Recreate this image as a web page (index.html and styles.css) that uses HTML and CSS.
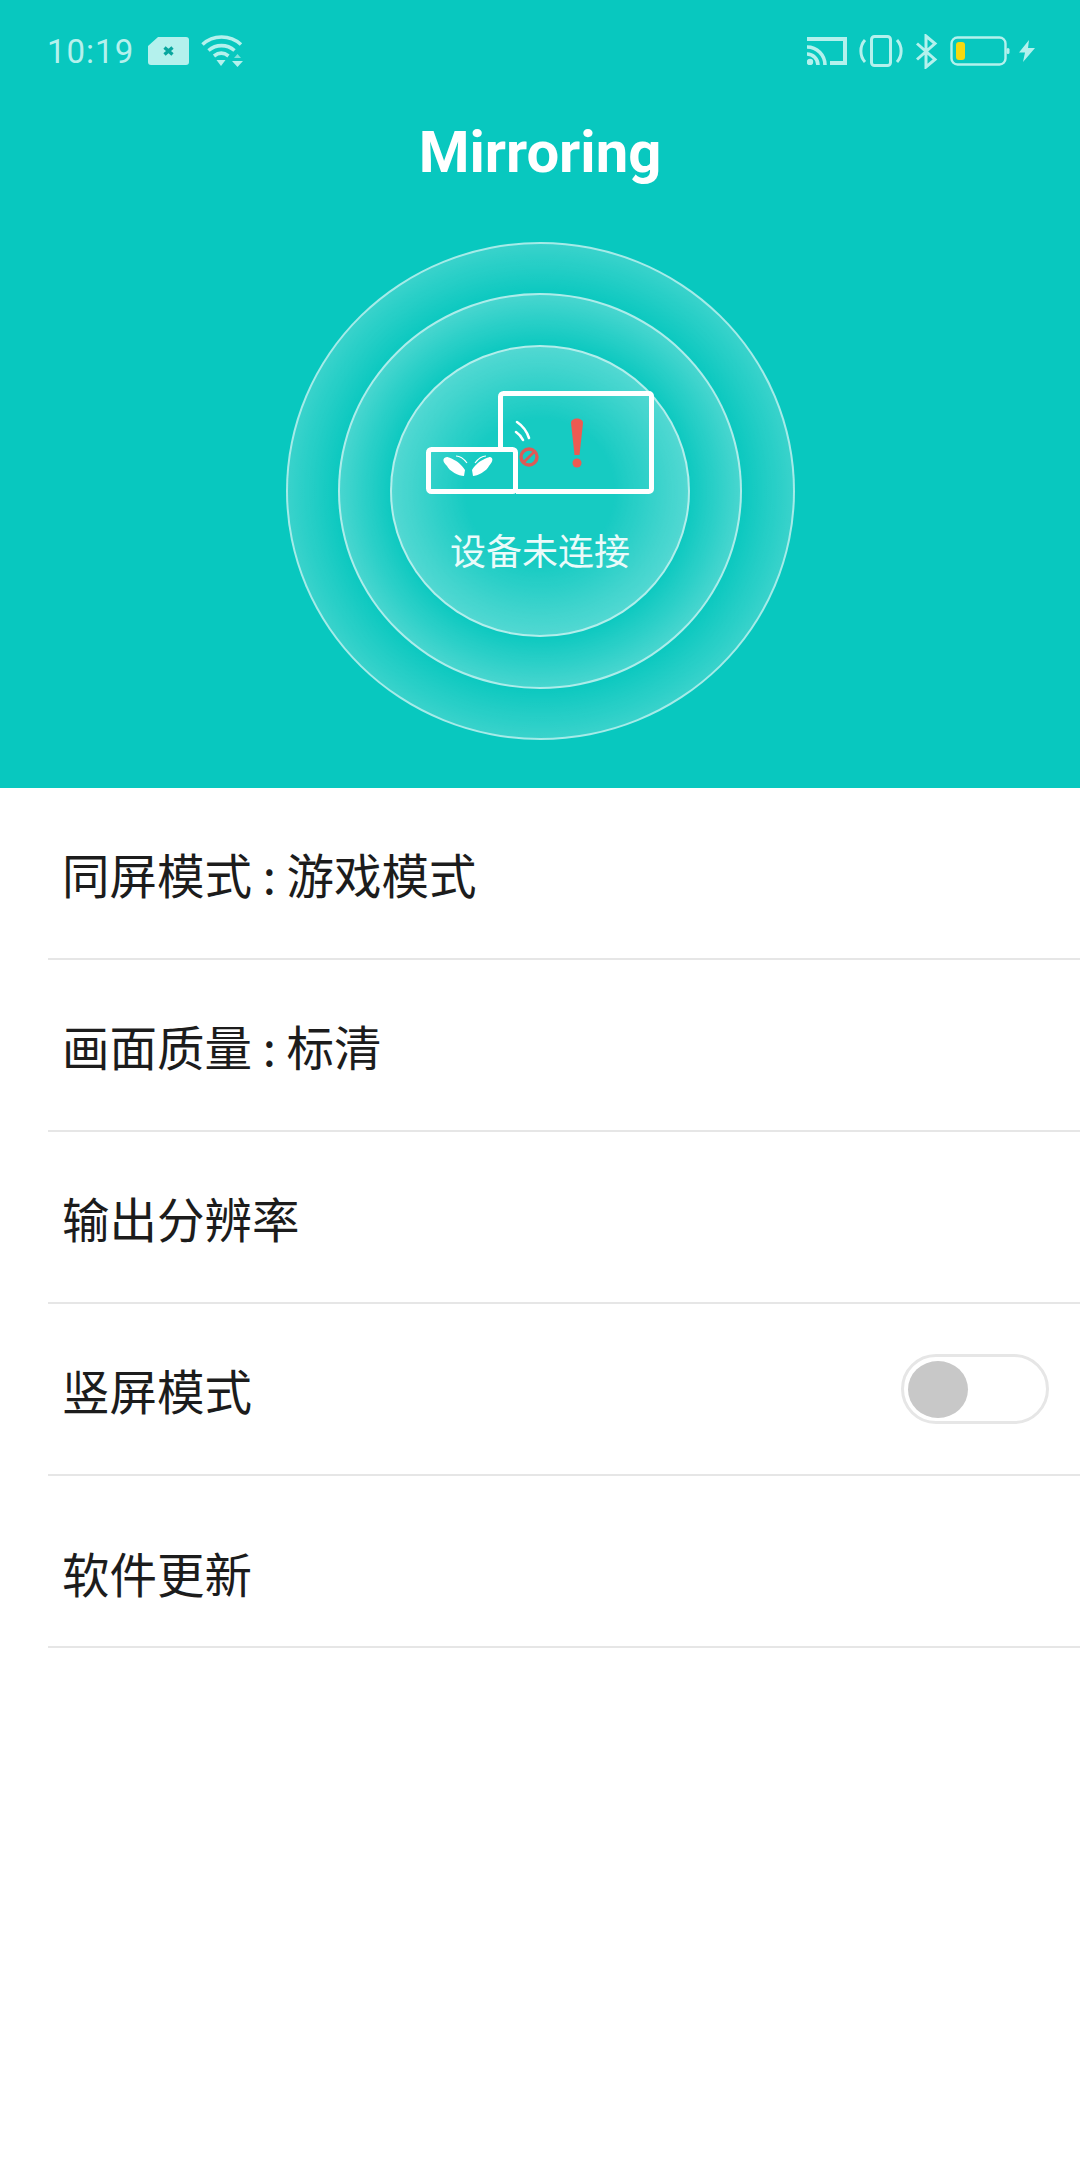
FILE: index.html
```html
<!DOCTYPE html>
<html lang="zh-CN">
<head>
    <meta charset="UTF-8">
    <meta name="viewport" content="width=device-width, initial-scale=1.0">
    <title>Mirroring</title>
    <link rel="stylesheet" href="styles.css">
</head>
<body>
    <div class="header">
        <!-- Status bar -->
        <div class="status-bar">
            <div class="status-left">
                <span class="clock">10:19</span>
                <svg class="sim-icon" width="41" height="28" viewBox="0 0 41 28">
                    <path d="M10 0H38a3 3 0 0 1 3 3V25a3 3 0 0 1-3 3H3a3 3 0 0 1-3-3V9z" fill="#b4f1ed"/>
                    <path d="M16.5 10.5l8 7M24.5 10.5l-8 7" stroke="#08a79f" stroke-width="3.4" fill="none"/>
                </svg>
                <svg class="wifi-icon" width="43" height="32" viewBox="0 0 43 32">
                    <g fill="none" stroke="#b4f1ed" stroke-width="3.6">
                        <path d="M1.5 9.5C12 -0.5 29 -0.5 40 9.5"/>
                        <path d="M7.5 15.5C15 9 26 9 33.5 15.5"/>
                        <path d="M13 21C17.500 17.500 23 17.500 27.500 21"/>
                    </g>
                    <path d="M15.500 25h9l-4.500 6z" fill="#b4f1ed"/>
                    <path d="M31 26h11l-5.500 6z" fill="#b4f1ed"/>
                    <path d="M33 23l3.500-4 3.500 4z" fill="#7fe3dc"/>
                </svg>
            </div>
            <div class="status-right">
                <svg width="40" height="28" viewBox="0 0 40 28">
                    <path d="M0 2H38V26H23" fill="none" stroke="#b4f1ed" stroke-width="4"/>
                    <path d="M0 10C10 10 18 18 18 28M0 17C6 17 11 22 11 28" fill="none" stroke="#b4f1ed" stroke-width="3.6"/>
                    <circle cx="3" cy="25" r="3.200" fill="#b4f1ed"/>
                </svg>
                <svg width="44" height="32" viewBox="0 0 44 32">
                    <rect x="12.500" y="1.500" width="19" height="29" rx="3" fill="none" stroke="#b4f1ed" stroke-width="3"/>
                    <path d="M6 5C0.500 11 0.500 21 6 27M38 5C43.500 11 43.500 21 38 27" fill="none" stroke="#b4f1ed" stroke-width="3"/>
                </svg>
                <svg width="23" height="35" viewBox="0 0 23 35">
                    <path d="M2 9.500L20 25.500L11 33V2L20 9.500L2 25.500" fill="none" stroke="#b4f1ed" stroke-width="3"/>
                </svg>
                <svg width="60" height="30" viewBox="0 0 60 30">
                    <rect x="1.500" y="1.500" width="54" height="27" rx="6" fill="none" stroke="#b4f1ed" stroke-width="2.400"/>
                    <rect x="6" y="6" width="9" height="18" rx="3" fill="#f6d90f"/>
                    <rect x="56.500" y="12" width="3" height="6" rx="1.500" fill="#b4f1ed"/>
                </svg>
                <svg class="bolt-icon" width="18" height="22" viewBox="0 0 18 22">
                    <path d="M11 0L1 12.500H7L5 22L17 8H10z" fill="#b4f1ed"/>
                </svg>
            </div>
        </div>

        <h1 class="title">Mirroring</h1>

        <!-- Connection rings -->
        <div class="ring ring-outer">
            <div class="ring ring-middle">
                <div class="ring ring-inner">
                    <svg class="device-icon" width="228" height="103" viewBox="0 0 228 103">
                        <path d="M74.500 59V5.500a3 3 0 0 1 3-3H223a2.500 2.500 0 0 1 2.500 2.500V98a2.500 2.500 0 0 1-2.500 2.500H90" fill="none" stroke="#fff" stroke-width="5"/>
                        <rect x="2.500" y="58.500" width="87" height="42" rx="3" fill="none" stroke="#fff" stroke-width="5"/>
                        <!-- butterfly -->
                        <path d="M44 79C37 68 26 66 26 66C26 66 18 67 26 75C28 80 38 85 43 85z" fill="#fff" transform="translate(-5 0)"/>
                        <path d="M46 79C53 68 64 66 64 66C64 66 70 67 63 75C61 80 51 85 47 85z" fill="#fff"/>
                        <path d="M30 65C34 65 38 68 41 72M60 65C56 65 52 68 49 72" fill="none" stroke="#fff" stroke-width="1.200"/>
                        <!-- signal -->
                        <path d="M91 31C97 35 101 41 103 47M90 41C93 43 95 45 97 49" fill="none" stroke="#fff" stroke-width="2.600" stroke-linecap="round"/>
                        <circle cx="103" cy="66" r="8" fill="none" stroke="#dc5b57" stroke-width="3.400"/>
                        <path d="M98 71L108 61" stroke="#dc5b57" stroke-width="2.600"/>
                        <!-- exclamation -->
                        <path d="M145 32C145 26 157 26 157 32L153.500 64H148.500z" fill="#ee5a52"/>
                        <circle cx="151" cy="72" r="4.500" fill="#ee5a52"/>
                    </svg>
                    <div class="ring-label">设备未连接</div>
                </div>
            </div>
        </div>
    </div>

    <!-- Settings list -->
    <ul class="menu">
        <li class="menu-item">同屏模式 : 游戏模式</li>
        <li class="menu-item">画面质量 : 标清</li>
        <li class="menu-item">输出分辨率</li>
        <li class="menu-item">
            竖屏模式
            <span class="switch"><span class="switch-knob"></span></span>
        </li>
        <li class="menu-item menu-item-last">软件更新</li>
    </ul>
</body>
</html>
```

FILE: styles.css
```css
/* Global Styles */
body {
    font-family: "Noto Sans CJK SC", Roboto, sans-serif;
    margin: 0;
    padding: 0;
    background-color: #fff;
}

/* Header */
.header {
    height: 788px;
    background-color: #08c8bf;
    display: flex;
    flex-direction: column;
    align-items: center;
}

.status-bar {
    width: 100%;
    height: 102px;
    box-sizing: border-box;
    padding: 0 44px 0 47px;
    display: flex;
    align-items: center;
    justify-content: space-between;
}

.status-left,
.status-right {
    display: flex;
    align-items: center;
}

.status-right {
    gap: 12px;
}

.clock {
    font-family: Roboto, sans-serif;
    font-size: 33px;
    letter-spacing: 1px;
    color: #b4f1ed;
    margin-right: 14px;
}

.wifi-icon {
    margin-left: 12px;
}

.bolt-icon {
    margin-left: -4px;
}

.title {
    font-family: Roboto, sans-serif;
    font-size: 58px;
    line-height: 68px;
    font-weight: 700;
    color: #fff;
    margin: 16px 0 56px;
}

/* Rings */
.ring {
    box-sizing: border-box;
    border-radius: 50%;
    border: 2px solid rgba(255, 255, 255, 0.55);
    display: flex;
    flex-direction: column;
    align-items: center;
    justify-content: center;
    flex-shrink: 0;
}

.ring-outer {
    width: 509px;
    height: 498px;
    background: radial-gradient(closest-side, rgba(255, 255, 255, 0) 78%, rgba(255, 255, 255, 0.2) 100%);
}

.ring-middle {
    width: 404px;
    height: 396px;
    background: radial-gradient(closest-side, rgba(255, 255, 255, 0) 72%, rgba(255, 255, 255, 0.26) 100%);
}

.ring-inner {
    width: 300px;
    height: 292px;
    justify-content: flex-start;
    padding-top: 44px;
    background: radial-gradient(closest-side, rgba(255, 255, 255, 0.06) 50%, rgba(255, 255, 255, 0.3) 100%);
}

.ring-label {
    font-size: 36px;
    line-height: 50px;
    color: #eafbfa;
    margin-top: 30px;
}

/* Settings list */
.menu {
    list-style: none;
    margin: 0;
    padding: 0;
}

.menu-item {
    height: 172px;
    box-sizing: border-box;
    margin-left: 48px;
    padding: 0 31px 0 14px;
    border-bottom: 2px solid #e6e6e6;
    font-size: 47.500px;
    color: #1c1c1c;
    display: flex;
    align-items: center;
    justify-content: space-between;
}

.menu-item-last {
    padding-top: 22px;
}

/* Toggle */
.switch {
    width: 148px;
    height: 70px;
    box-sizing: border-box;
    border: 3px solid #e6e6e6;
    border-radius: 35px;
    padding: 4px;
    display: flex;
    align-items: center;
}

.switch-knob {
    width: 60px;
    height: 57px;
    border-radius: 50%;
    background-color: #c8c8c8;
}
```
